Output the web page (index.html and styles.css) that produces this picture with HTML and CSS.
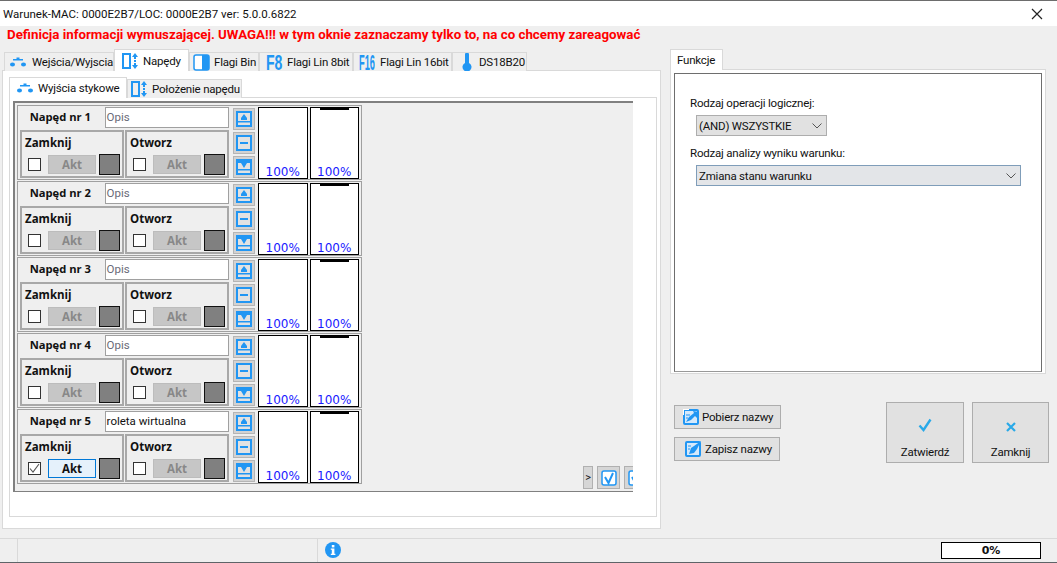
FILE: index.html
```html
<!DOCTYPE html>
<html lang="pl">
<head>
<meta charset="utf-8">
<title>Warunek</title>
<link rel="stylesheet" href="styles.css">
</head>
<body>
<svg class="defs" width="0" height="0">
  <symbol id="i-switch" viewBox="0 0 16 10"><rect x="3" y="2" width="10" height="1.500" fill="#2196f3"/><rect x="6.500" y="0.500" width="3" height="2" fill="#2196f3"/><ellipse cx="2.500" cy="7.500" rx="2.500" ry="2" fill="#2196f3"/><ellipse cx="13.500" cy="7.500" rx="2.500" ry="2" fill="#2196f3"/></symbol>
  <symbol id="i-drive" viewBox="0 0 16 16"><rect x="1" y="1" width="7" height="14" fill="none" stroke="#2196f3" stroke-width="2"/><path d="M13 0l3 4h-2v2h-2V4h-2zM13 16l3-4h-2v-2h-2v2h-2zM12 7h2v2h-2z" fill="#2196f3"/></symbol>
  <symbol id="i-up" viewBox="0 0 16 16"><rect x="1" y="1" width="14" height="14" fill="#e2e2e2" stroke="#2196f3" stroke-width="2"/><path d="M8 3l3 4v2H5V7zM2 10h12v1.500H2z" fill="#2196f3"/></symbol>
  <symbol id="i-stop" viewBox="0 0 16 16"><rect x="1" y="1" width="14" height="14" fill="#e2e2e2" stroke="#2196f3" stroke-width="2"/><rect x="4" y="7" width="8" height="2" fill="#2196f3"/></symbol>
  <symbol id="i-down" viewBox="0 0 16 16"><rect x="1" y="1" width="14" height="14" fill="#e2e2e2" stroke="#2196f3" stroke-width="2"/><path d="M2 2h12v2h-3l-3 5-3-5H2zM2 10h12v1.500H2z" fill="#2196f3"/></symbol>
  <symbol id="i-get" viewBox="0 0 16 16"><rect x="1" y="1" width="14" height="14" rx="1" fill="#d5e9fb" stroke="#2196f3" stroke-width="2"/><path d="M0 0h6v1H1v5H0z" fill="#fff"/><path d="M3 13l3-5 5-4-1-2 6 1-2 6-2-2-4 4z" fill="#2196f3"/><path d="M3 6h4M3 9h2" stroke="#2196f3"/></symbol>
  <symbol id="i-save" viewBox="0 0 16 16"><rect x="1" y="1" width="14" height="14" rx="1" fill="#d5e9fb" stroke="#2196f3" stroke-width="2"/><path d="M4 13l2-6 3-2 7-5-4 8-3 4z" fill="#2196f3"/><path d="M3 5h3M3 8h2" stroke="#2196f3"/></symbol>
  <symbol id="i-check" viewBox="0 0 16 16"><rect x="1" y="1" width="14" height="14" rx="2" fill="#fff" stroke="#2196f3" stroke-width="1.500"/><path d="M4 7l3.500 6L12 3" fill="none" stroke="#2196f3" stroke-width="2"/></symbol>
</svg>

<header class="titlebar">
  <span class="title">Warunek-MAC: 0000E2B7/LOC: 0000E2B7 ver: 5.0.0.6822</span>
  <svg class="close-x" width="12" height="12" viewBox="0 0 12 12"><path d="M1 1l10 10M11 1L1 11" stroke="#222" stroke-width="1.200" fill="none"/></svg>
</header>

<h1 class="warning">Definicja informacji wymuszającej. UWAGA!!! w tym oknie zaznaczamy tylko to, na co chcemy zareagować</h1>

<main class="content">
  <section class="left">
    <nav class="tabs main-tabs">
      <div class="tab tab-a"><svg width="16" height="10"><use href="#i-switch"/></svg>Wejścia/Wyjscia</div>
      <div class="tab tab-b active"><svg width="16" height="16"><use href="#i-drive"/></svg>Napędy</div>
      <div class="tab tab-c"><svg width="17" height="17" viewBox="0 0 17 17"><rect x="1" y="1" width="15" height="15" rx="2" fill="#fff" stroke="#2196f3" stroke-width="1.500"/><path d="M9 1h5a2 2 0 0 1 2 2v11a2 2 0 0 1-2 2H9z" fill="#2196f3"/></svg>Flagi Bin</div>
      <div class="tab tab-d"><span class="ftag">F8</span>Flagi Lin 8bit</div>
      <div class="tab tab-e"><span class="ftag">F16</span>Flagi Lin 16bit</div>
      <div class="tab tab-f"><svg width="10" height="18" viewBox="0 0 10 18"><path d="M3 1.500a2 2 0 0 1 4 0V10a4.500 4.500 0 1 1-4 0z" fill="#2196f3"/></svg>DS18B20</div>
    </nav>
    <div class="main-panel">
      <nav class="tabs sub-tabs">
        <div class="tab tab-g active"><svg width="16" height="10"><use href="#i-switch"/></svg>Wyjścia stykowe</div>
        <div class="tab tab-h"><svg width="16" height="16"><use href="#i-drive"/></svg>Położenie napędu</div>
      </nav>
      <div class="sub-panel">
        <div class="grid-panel">
          <div class="rows">

            <article class="row">
              <div class="row-main">
                <div class="row-head"><strong class="row-name">Napęd nr 1</strong><div class="desc muted">Opis</div></div>
                <div class="row-groups">
                  <div class="group"><b class="group-title">Zamknij</b><div class="controls"><span class="cb"></span><span class="akt">Akt</span><span class="sq"></span></div></div>
                  <div class="group"><b class="group-title">Otworz</b><div class="controls"><span class="cb"></span><span class="akt">Akt</span><span class="sq"></span></div></div>
                </div>
              </div>
              <div class="row-btns">
                <span class="sbtn"><svg width="16" height="16"><use href="#i-up"/></svg></span>
                <span class="sbtn"><svg width="16" height="16"><use href="#i-stop"/></svg></span>
                <span class="sbtn"><svg width="16" height="16"><use href="#i-down"/></svg></span>
              </div>
              <div class="bar">100%</div>
              <div class="bar bar-top">100%</div>
            </article>

            <article class="row">
              <div class="row-main">
                <div class="row-head"><strong class="row-name">Napęd nr 2</strong><div class="desc muted">Opis</div></div>
                <div class="row-groups">
                  <div class="group"><b class="group-title">Zamknij</b><div class="controls"><span class="cb"></span><span class="akt">Akt</span><span class="sq"></span></div></div>
                  <div class="group"><b class="group-title">Otworz</b><div class="controls"><span class="cb"></span><span class="akt">Akt</span><span class="sq"></span></div></div>
                </div>
              </div>
              <div class="row-btns">
                <span class="sbtn"><svg width="16" height="16"><use href="#i-up"/></svg></span>
                <span class="sbtn"><svg width="16" height="16"><use href="#i-stop"/></svg></span>
                <span class="sbtn"><svg width="16" height="16"><use href="#i-down"/></svg></span>
              </div>
              <div class="bar">100%</div>
              <div class="bar bar-top">100%</div>
            </article>

            <article class="row">
              <div class="row-main">
                <div class="row-head"><strong class="row-name">Napęd nr 3</strong><div class="desc muted">Opis</div></div>
                <div class="row-groups">
                  <div class="group"><b class="group-title">Zamknij</b><div class="controls"><span class="cb"></span><span class="akt">Akt</span><span class="sq"></span></div></div>
                  <div class="group"><b class="group-title">Otworz</b><div class="controls"><span class="cb"></span><span class="akt">Akt</span><span class="sq"></span></div></div>
                </div>
              </div>
              <div class="row-btns">
                <span class="sbtn"><svg width="16" height="16"><use href="#i-up"/></svg></span>
                <span class="sbtn"><svg width="16" height="16"><use href="#i-stop"/></svg></span>
                <span class="sbtn"><svg width="16" height="16"><use href="#i-down"/></svg></span>
              </div>
              <div class="bar">100%</div>
              <div class="bar bar-top">100%</div>
            </article>

            <article class="row">
              <div class="row-main">
                <div class="row-head"><strong class="row-name">Napęd nr 4</strong><div class="desc muted">Opis</div></div>
                <div class="row-groups">
                  <div class="group"><b class="group-title">Zamknij</b><div class="controls"><span class="cb"></span><span class="akt">Akt</span><span class="sq"></span></div></div>
                  <div class="group"><b class="group-title">Otworz</b><div class="controls"><span class="cb"></span><span class="akt">Akt</span><span class="sq"></span></div></div>
                </div>
              </div>
              <div class="row-btns">
                <span class="sbtn"><svg width="16" height="16"><use href="#i-up"/></svg></span>
                <span class="sbtn"><svg width="16" height="16"><use href="#i-stop"/></svg></span>
                <span class="sbtn"><svg width="16" height="16"><use href="#i-down"/></svg></span>
              </div>
              <div class="bar">100%</div>
              <div class="bar bar-top">100%</div>
            </article>

            <article class="row">
              <div class="row-main">
                <div class="row-head"><strong class="row-name">Napęd nr 5</strong><div class="desc">roleta wirtualna</div></div>
                <div class="row-groups">
                  <div class="group"><b class="group-title">Zamknij</b><div class="controls"><span class="cb checked"><svg width="11" height="11" viewBox="0 0 11 11"><path d="M1 5.500l3 3.500 6-8" fill="none" stroke="#555" stroke-width="1.100"/></svg></span><span class="akt on">Akt</span><span class="sq"></span></div></div>
                  <div class="group"><b class="group-title">Otworz</b><div class="controls"><span class="cb"></span><span class="akt">Akt</span><span class="sq"></span></div></div>
                </div>
              </div>
              <div class="row-btns">
                <span class="sbtn"><svg width="16" height="16"><use href="#i-up"/></svg></span>
                <span class="sbtn"><svg width="16" height="16"><use href="#i-stop"/></svg></span>
                <span class="sbtn"><svg width="16" height="16"><use href="#i-down"/></svg></span>
              </div>
              <div class="bar">100%</div>
              <div class="bar bar-top">100%</div>
            </article>

          </div>
          <div class="grid-tools">
            <span class="tool tool-more">&gt;</span>
            <span class="tool"><svg width="16" height="16"><use href="#i-check"/></svg></span>
            <span class="tool tool-cut"><svg width="16" height="16"><use href="#i-check"/></svg></span>
          </div>
        </div>
      </div>
    </div>
  </section>

  <aside class="right">
    <nav class="tabs fn-tabs"><div class="tab tab-fn active">Funkcje</div></nav>
    <div class="fn-panel">
      <div class="fn-inner">
        <label class="fn-label">Rodzaj operacji logicznej:</label>
        <div class="select sel-a">(AND) WSZYSTKIE<svg width="10" height="6" viewBox="0 0 10 6"><path d="M.5.500L5 5 9.500.500" fill="none" stroke="#555"/></svg></div>
        <label class="fn-label fn-label-2">Rodzaj analizy wyniku warunku:</label>
        <div class="select sel-b">Zmiana stanu warunku<svg width="10" height="6" viewBox="0 0 10 6"><path d="M.5.500L5 5 9.500.500" fill="none" stroke="#555"/></svg></div>
      </div>
    </div>
    <div class="actions">
      <div class="names">
        <div class="btn btn-get"><svg width="16" height="16"><use href="#i-get"/></svg>Pobierz nazwy</div>
        <div class="btn btn-save"><svg width="16" height="16"><use href="#i-save"/></svg>Zapisz nazwy</div>
      </div>
      <div class="big-btn btn-ok"><svg width="14" height="14" viewBox="0 0 14 14"><path d="M1.500 7.500L5.500 12 12.500 1.500" fill="none" stroke="#29a9e8" stroke-width="2.400"/></svg>Zatwierdź</div>
      <div class="big-btn btn-no"><svg width="10" height="10" viewBox="0 0 10 10"><path d="M1 1l8 8M9 1L1 9" fill="none" stroke="#29a9e8" stroke-width="2.200"/></svg>Zamknij</div>
    </div>
  </aside>
</main>

<footer class="status">
  <div class="st st-1"></div>
  <div class="st st-2"></div>
  <div class="st st-3"><svg width="16" height="16" viewBox="0 0 16 16"><circle cx="8" cy="8" r="8" fill="#2196f3"/><rect x="6.800" y="3" width="2.600" height="2.400" fill="#fff"/><path d="M5.800 6.500h3.600v5.200h1v1.300H5.800v-1.300h1V7.800h-1z" fill="#fff"/></svg></div>
  <div class="progress">0%</div>
</footer>
</body>
</html>
```

FILE: styles.css
```css
* { box-sizing: border-box; }
html, body { margin: 0; padding: 0; }
body {
  width: 1057px; height: 563px; overflow: hidden;
  background: #efefef; color: #111;
  font: 11.500px/16px Roboto, "Open Sans", sans-serif;
  letter-spacing: -.2px;
  display: flex; flex-direction: column;
  border-top: 1px solid #6d6d6d; border-bottom: 1px solid #5e6468;
}
.defs { position: absolute; }
svg { display: block; flex: none; }

.titlebar { height: 25px; background: #fff; display: flex; align-items: center; justify-content: space-between; padding: 0 14px 0 3px; flex: none; }
.title { letter-spacing: 0; }
.warning { margin: 0; height: 20px; padding-left: 7px; font: bold 13.300px/17px Roboto, sans-serif; letter-spacing: 0; color: #f00; flex: none; white-space: nowrap; }

.content { display: flex; flex: 1; min-height: 0; }
.left { width: 670px; padding: 3px 0 0 2px; flex: none; }
.right { flex: 1; padding-top: 3px; }

.tabs { display: flex; align-items: flex-end; }
.tab { display: flex; align-items: center; white-space: nowrap; background: #efefef; border: 1px solid #d9d9d9; border-bottom: none; }
.tab.active { background: #fff; }

.main-tabs { height: 22px; padding-left: 2px; position: relative; z-index: 1; margin-bottom: -1px; }
.main-tabs .tab { height: 19px; }
.main-tabs .tab.active { height: 22px; }
.tab-a { width: 110px; padding-left: 5px; gap: 6px; }
.tab-b { width: 75px; padding-left: 7px; gap: 5px; }
.tab-c { width: 70px; padding-left: 3px; gap: 4px; }
.tab-d { width: 94px; padding-left: 6px; gap: 5px; }
.tab-e { width: 99px; padding-left: 5px; gap: 5px; }
.tab-f { width: 75px; padding-left: 9px; gap: 7px; }
.ftag { font: bold 22px/19px "Liberation Sans", sans-serif; color: #2196f3; transform: scaleX(.64); transform-origin: left; width: 16px; letter-spacing: 0; }
.tab-e .ftag { transform: scaleX(.42); }

.main-panel { width: 659px; height: 459px; background: #fff; border: 1px solid #d9d9d9; padding: 6px 3px 0 6px; }
.sub-tabs { height: 21px; margin-bottom: -1px; position: relative; z-index: 1; }
.sub-tabs .tab { height: 19px; }
.sub-tabs .tab.active { height: 21px; }
.tab-g { width: 118px; padding-left: 7px; gap: 5px; }
.tab-h { width: 115px; padding-left: 3px; gap: 5px; }

.sub-panel { height: 420px; border: 1px solid #d9d9d9; padding: 3px 23px 0 3px; }
.grid-panel { height: 391px; background: #efefef; border: solid #808080; border-width: 2px 0 1px 2px; padding: 2px 0 0 2px; display: flex; justify-content: space-between; overflow: hidden; }
.rows { width: 345px; flex: none; }
.row { height: 75px; margin-bottom: 1px; border: 1px solid #a0a0a0; padding: 1px 0 0 2px; display: flex; align-items: flex-start; }
.row-main { width: 209px; flex: none; }
.row-head { display: flex; height: 22px; margin-bottom: 1px; }
.row-name { width: 81px; margin-right: 4px; font: bold 11.200px/19px "Open Sans", sans-serif; letter-spacing: 0; text-align: center; color: #111; }
.desc { width: 125px; height: 21px; background: #fff; border: 1px solid #a0a0a0; padding-left: 1px; line-height: 19px; letter-spacing: 0; }
.desc.muted { color: #6a6a78; }
.row-groups { display: flex; gap: 1px; }
.group { width: 104px; height: 48px; border: 2px solid #a8a8a8; padding: 2px 0 0 3px; }
.group-title { display: block; height: 20px; font: bold 11.500px/17px "Open Sans", sans-serif; letter-spacing: 0; }
.controls { display: flex; align-items: center; padding-left: 3px; }
.cb { width: 13px; height: 13px; background: #fff; border: 1px solid #333; display: flex; align-items: center; justify-content: center; margin-right: 7px; }
.akt { width: 48px; height: 19px; background: #c6c6c6; border: 1px solid #bcbcbc; color: #888; font: bold 11.500px/17px "Open Sans", sans-serif; letter-spacing: 0; text-align: center; margin-right: 3px; }
.akt.on { background: #e5f1fb; border-color: #0078d7; color: #111; }
.sq { width: 21px; height: 21px; background: #808080; border: 1px solid #111; }
.row-btns { width: 22px; margin: 1px 3px 0 4px; flex: none; display: flex; flex-direction: column; gap: 2px; }
.sbtn { width: 22px; height: 22px; background: #d2d2d2; border: 1px solid #b5b5b5; display: flex; align-items: center; justify-content: center; }
.bar { width: 50px; height: 72px; margin-right: 2px; background: #fff; border: 1px solid #000; color: #1a1aff; font: 12px/11px "DejaVu Sans", sans-serif; letter-spacing: 0; text-align: center; display: flex; align-items: flex-end; justify-content: center; position: relative; }
.bar-top::before { content: ""; position: absolute; top: 0; left: 9px; right: 9px; height: 2px; background: #000; }

.grid-tools { display: flex; align-self: flex-end; gap: 4px; margin-bottom: 2px; flex: none; width: 50px; overflow: hidden; }
.tool { height: 23px; width: 23px; flex: none; background: #d6d6d6; border: 1px solid #b0b0b0; display: flex; align-items: center; justify-content: center; font-size: 11px; }
.tool-more { width: 10px; }
.tool-cut { justify-content: flex-start; padding-left: 3px; }

.fn-tabs { height: 21px; }
.tab-fn { width: 53px; height: 21px; padding-left: 6px; }
.fn-panel { width: 376px; height: 305px; border: 1px solid #d9d9d9; margin-top: -1px; padding: 3px 3px 2px; background: #fff; }
.fn-inner { height: 299px; width: 368px; border: 1px solid #6e6e6e; border-bottom-color: #999; padding: 21px 0 0 15px; background: #fff; }
.fn-label { display: block; height: 16px; }
.fn-label-2 { margin-top: 9px; }
.select { display: flex; align-items: center; justify-content: space-between; height: 21px; margin: 4px 0 0 6px; padding: 0 4px 0 2px; }
.sel-a { width: 131px; background: #e1e1e1; border: 1px solid #adadad; }
.sel-b { width: 325px; background: #e3e5e8; border: 1px solid #7f9db9; }

.actions { display: flex; padding: 28px 0 0 4px; }
.names { width: 212px; display: flex; flex-direction: column; gap: 8px; padding-top: 3px; }
.btn { height: 24px; background: #e1e1e1; border: 1px solid #adadad; display: flex; align-items: center; gap: 3px; padding-left: 8px; white-space: nowrap; }
.btn-get { width: 107px; }
.btn-save { width: 106px; padding-left: 10px; gap: 4px; }
.big-btn { height: 61px; background: #e1e1e1; border: 1px solid #adadad; display: flex; flex-direction: column; align-items: center; justify-content: flex-end; gap: 12px; padding-bottom: 2px; }
.btn-ok { width: 78px; margin-right: 8px; }
.btn-no { width: 77px; }

.status { height: 24px; flex: none; border-top: 1px solid #d9d9d9; display: flex; align-items: center; }
.st { height: 100%; }
.st-1 { width: 18px; border-right: 1px solid #d9d9d9; }
.st-2 { width: 300px; border-right: 1px solid #d9d9d9; }
.st-3 { width: 623px; padding: 3px 0 0 7px; }
.progress { width: 100px; height: 17px; background: #fff; border: 1px solid #000; font: bold 11px/15px "DejaVu Sans", sans-serif; letter-spacing: 0; text-align: center; }
```
